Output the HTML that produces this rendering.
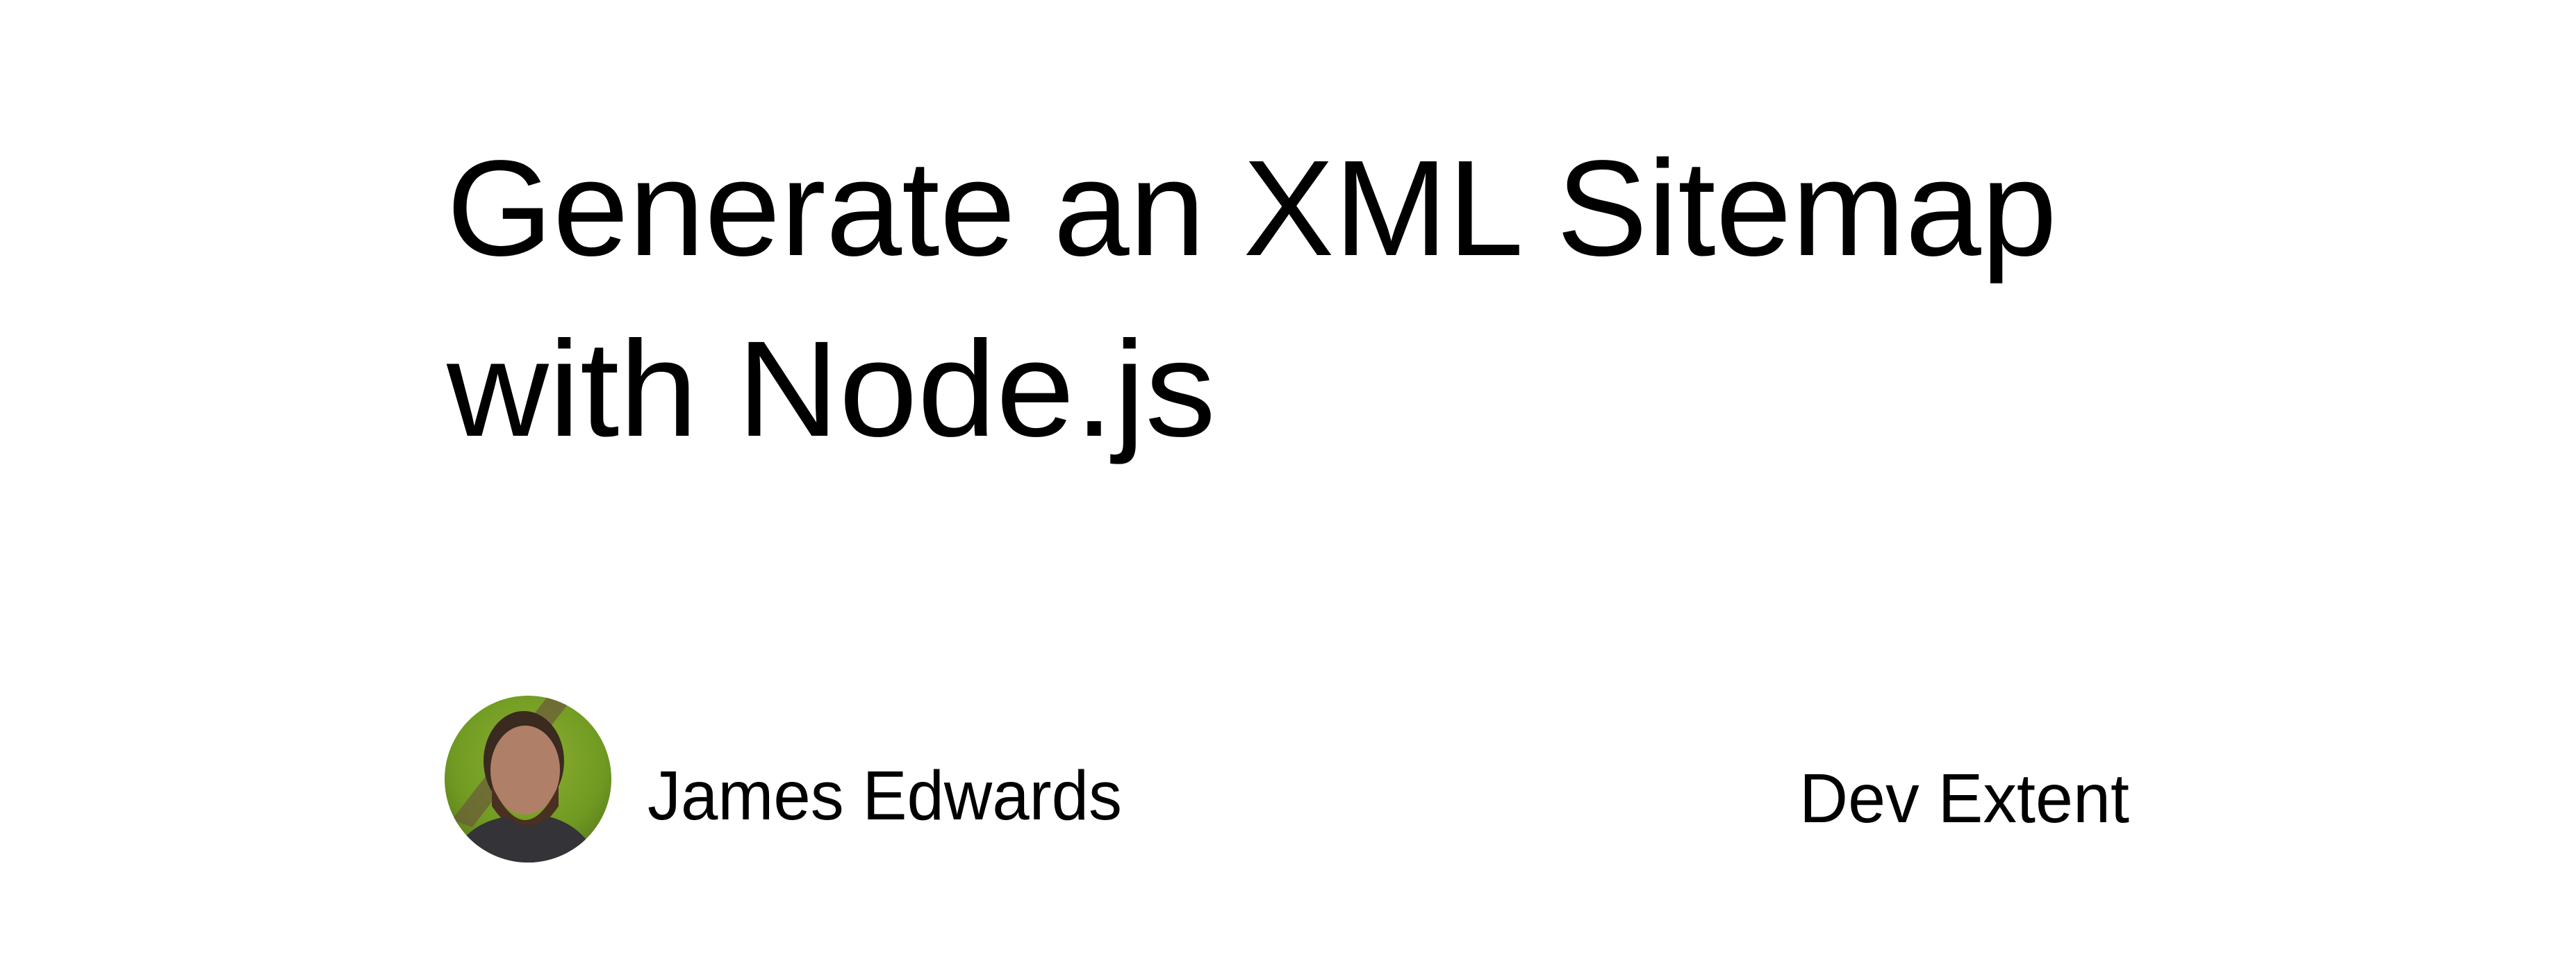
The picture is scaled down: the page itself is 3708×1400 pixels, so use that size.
<!DOCTYPE html>
<html><head><meta charset="utf-8"><style>
html,body{margin:0;padding:0;background:#fff;width:3708px;height:1400px;overflow:hidden}
svg{display:block}
text{font-family:"Liberation Sans",sans-serif;fill:#000}
</style></head><body>
<svg width="3708" height="1400" viewBox="0 0 3708 1400" xmlns="http://www.w3.org/2000/svg">
<defs>
<clipPath id="c"><circle cx="760" cy="1121" r="120"/></clipPath>
<radialGradient id="bg" cx="0.5" cy="0.4" r="0.7">
<stop offset="0" stop-color="#8fb032"/><stop offset="0.6" stop-color="#6f9a22"/><stop offset="1" stop-color="#4f6b1a"/>
</radialGradient>
</defs>
<text x="643" y="367" font-size="196" textLength="2318" lengthAdjust="spacingAndGlyphs">Generate an XML Sitemap</text>
<text x="643" y="627" font-size="196" textLength="1107" lengthAdjust="spacingAndGlyphs">with Node.js</text>
<g clip-path="url(#c)">
<rect x="630" y="990" width="260" height="260" fill="url(#bg)"/>
<path d="M790 1000 L820 1010 L680 1190 L650 1180 Z" fill="#6b5a3a" opacity="0.7"/>
<ellipse cx="754" cy="1095" rx="58" ry="72" fill="#3a2a20"/>
<ellipse cx="756" cy="1108" rx="50" ry="64" fill="#b07f68"/>
<path d="M708 1130 Q756 1230 804 1130 L804 1160 Q756 1230 708 1160 Z" fill="#4a3020"/>
<path d="M640 1260 Q660 1185 730 1175 Q760 1200 790 1175 Q850 1190 870 1260 Z" fill="#333338"/>
</g>
<text x="932" y="1179" font-size="100" textLength="683" lengthAdjust="spacingAndGlyphs">James Edwards</text>
<text x="2590" y="1183" font-size="100" textLength="475" lengthAdjust="spacingAndGlyphs">Dev Extent</text>
</svg>
</body></html>
